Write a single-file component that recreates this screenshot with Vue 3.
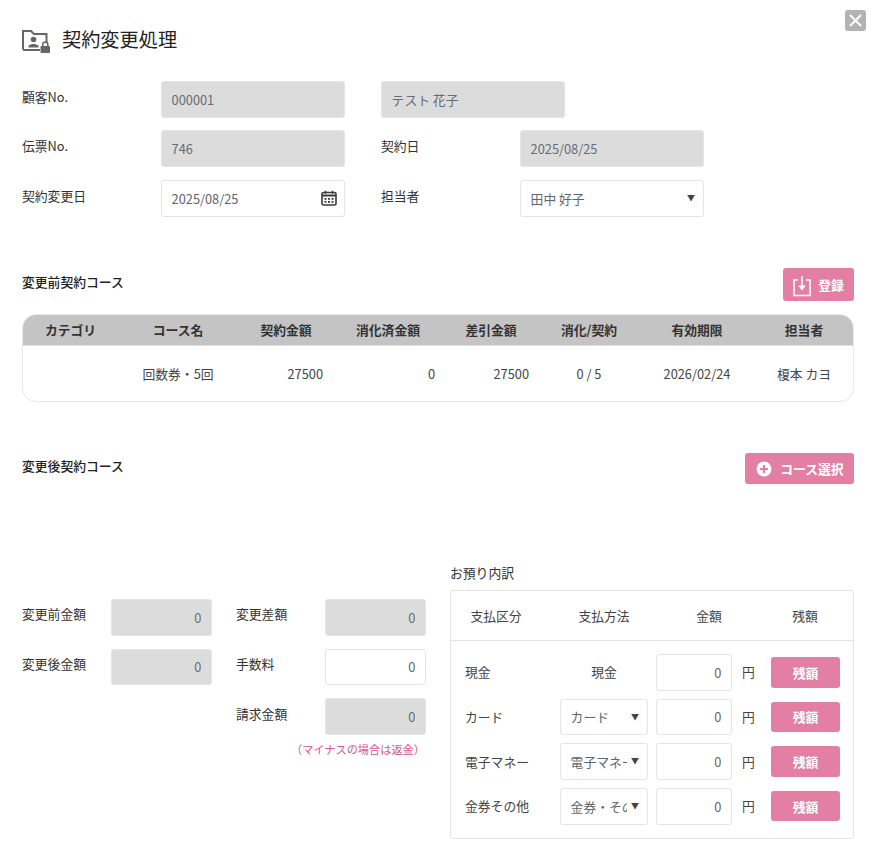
<script setup>
const columns = [
  { head: 'カテゴリ', cell: '', cls: '' },
  { head: 'コース名', cell: '回数券・5回', cls: '' },
  { head: '契約金額', cell: '27500', cls: 'amt-a' },
  { head: '消化済金額', cell: '0', cls: 'amt-b' },
  { head: '差引金額', cell: '27500', cls: 'amt-c' },
  { head: '消化/契約', cell: '0 / 5', cls: '' },
  { head: '有効期限', cell: '2026/02/24', cls: '' },
  { head: '担当者', cell: '榎本 カヨ', cls: 'last' }
]
const payments = [
  { label: '現金', method: '現金', select: false },
  { label: 'カード', method: 'カード', select: true },
  { label: '電子マネー', method: '電子マネー', select: true },
  { label: '金券その他', method: '金券・その他', select: true }
]
</script>

<template>
  <div class="page">
    <button class="close" type="button" aria-label="閉じる">
      <svg width="21" height="21" viewBox="0 0 21 21"><path d="M5 5 16 16M16 5 5 16" stroke="#fff" stroke-width="2" fill="none"/></svg>
    </button>

    <header class="title-row">
      <svg class="title-icon" width="29" height="23" viewBox="0 0 29 23">
        <path d="M1 19.500V1h8l3 3h12.500v8" fill="none" stroke="#666" stroke-width="2"/>
        <path d="M1 20h17" fill="none" stroke="#666" stroke-width="2"/>
        <circle cx="11.500" cy="9.500" r="2.800" fill="#666"/>
        <path d="M6.500 17.500v-2l3.500-1.500h3l3.500 1.500v2z" fill="#666"/>
        <rect x="18.500" y="16" width="9.500" height="7" rx="1" fill="#666"/>
        <path d="M20.800 16.500v-2a2.500 2.500 0 0 1 5 0v2" fill="none" stroke="#666" stroke-width="1.500"/>
      </svg>
      <h1>契約変更処理</h1>
    </header>

    <section class="form">
      <div class="form-row">
        <label>顧客No.</label>
        <input class="field" disabled value="000001" />
        <input class="field name" disabled value="テスト 花子" />
      </div>
      <div class="form-row">
        <label>伝票No.</label>
        <input class="field" disabled value="746" />
        <label class="second">契約日</label>
        <input class="field" disabled value="2025/08/25" />
      </div>
      <div class="form-row">
        <label>契約変更日</label>
        <div class="date-wrap">
          <input class="field" value="2025/08/25" />
          <svg class="cal" width="16" height="16" viewBox="0 0 16 16">
            <rect x="1" y="2.500" width="14" height="12.500" rx="1.500" fill="none" stroke="#3a3a3a" stroke-width="1.600"/>
            <path d="M1 5.500h14" stroke="#3a3a3a" stroke-width="2"/>
            <path d="M4.500 .8v3M11.500 .8v3" stroke="#3a3a3a" stroke-width="1.500"/>
            <path d="M3.500 8h2v1.800h-2zM7 8h2v1.800H7zM10.500 8h2v1.800h-2zM3.500 11h2v1.800h-2zM7 11h2v1.800H7zM10.500 11h2v1.800h-2z" fill="#3a3a3a"/>
          </svg>
        </div>
        <label class="second">担当者</label>
        <div class="select-wrap wide">
          <select class="field"><option>田中 好子</option></select>
        </div>
      </div>
    </section>

    <section class="section-head before">
      <h2>変更前契約コース</h2>
      <button class="pink reg" type="button">
        <svg width="20" height="22" viewBox="0 0 20 22">
          <path d="M6 5H2v15.500h16V5h-4" fill="none" stroke="#fff" stroke-width="1.600"/>
          <path d="M10 1v11" stroke="#fff" stroke-width="1.600"/>
          <path d="M6.200 10.500h7.600L10 15.500z" fill="#fff"/>
        </svg>
        登録
      </button>
    </section>

    <div class="course-table">
      <div class="t-row t-head">
        <div v-for="c in columns" :key="c.head" class="t-cell" :class="{ last: c.cls === 'last', shift: c.cls === 'amt-c' }">{{ c.head }}</div>
      </div>
      <div class="t-row t-body">
        <div v-for="c in columns" :key="c.head" class="t-cell" :class="c.cls">{{ c.cell }}</div>
      </div>
    </div>

    <section class="section-head after">
      <h2>変更後契約コース</h2>
      <button class="pink select-course" type="button">
        <svg width="16" height="16" viewBox="0 0 16 16">
          <circle cx="8" cy="8" r="7.500" fill="#fff"/>
          <path d="M8 4v8M4 8h8" stroke="#e27fa3" stroke-width="2.200"/>
        </svg>
        コース選択
      </button>
    </section>

    <section class="bottom">
      <div class="totals">
        <div class="total-col">
          <div class="total-row"><label>変更前金額</label><input class="field num" disabled value="0" /></div>
          <div class="total-row"><label>変更後金額</label><input class="field num" disabled value="0" /></div>
        </div>
        <div class="total-col">
          <div class="total-row"><label>変更差額</label><input class="field num" disabled value="0" /></div>
          <div class="total-row"><label>手数料</label><input class="field num" value="0" /></div>
          <div class="total-row"><label>請求金額</label><input class="field num" disabled value="0" /></div>
          <p class="note">（マイナスの場合は返金）</p>
        </div>
      </div>

      <div class="deposit">
        <div class="deposit-title">お預り内訳</div>
        <div class="panel">
          <div class="panel-head">
            <span class="first">支払区分</span><span>支払方法</span><span>金額</span><span>残額</span>
          </div>
          <div class="panel-body">
            <div v-for="p in payments" :key="p.label" class="pay-row">
              <span class="pay-label">{{ p.label }}</span>
              <div v-if="p.select" class="select-wrap">
                <select class="field"><option>{{ p.method }}</option></select>
              </div>
              <span v-else class="pay-method">{{ p.method }}</span>
              <input class="field num" value="0" />
              <span class="yen">円</span>
              <button class="pink rest" type="button">残額</button>
            </div>
          </div>
        </div>
      </div>
    </section>
  </div>
</template>

<style>
html, body { margin: 0; background: #fff; }
</style>

<style scoped>
* { box-sizing: border-box; }
.page {
  position: relative;
  width: 873px;
  height: 845px;
  overflow: hidden;
  padding: 20px 19px 0 22px;
  font-family: "Noto Sans CJK JP", "Noto Sans", sans-serif;
  font-size: 12.8px;
  color: #333;
  background: #fff;
}
.close {
  position: absolute;
  left: 845px;
  top: 10px;
  width: 21px;
  height: 21px;
  padding: 0;
  border: 0;
  border-radius: 3px;
  background: #b3b3b3;
  display: flex;
}
.title-row { display: flex; align-items: center; height: 40px; gap: 11px; }
.title-icon { margin-top: 2px; flex: none; }
h1 { margin: 0; font-size: 19.2px; font-weight: 400; color: #222; line-height: 38px; padding-bottom: 2px; }
h2 { margin: 0; font-size: 12.8px; font-weight: 500; color: #222; }

.form { margin-top: 20.8px; display: flex; flex-direction: column; gap: 12.8px; }
.form-row { display: flex; height: 36.8px; }
.form-row label { width: 139px; flex: none; padding-top: 6px; line-height: 20px; }
.form-row label.second { margin-left: 36px; }
.form-row > .field, .date-wrap, .wide { width: 184px; flex: none; }
.form-row > .name { margin-left: 36px; }

.field {
  width: 100%;
  height: 36.8px;
  padding: 0 9.600px;
  border: 1px solid #e4e4e4;
  border-radius: 3px;
  background: #fff;
  color: #5f656c;
  font: inherit;
  font-size: 12.8px;
  outline: none;
  appearance: none;
  opacity: 1;
}
.field:disabled { background: #dcdcdc; color: #666c73; -webkit-text-fill-color: #666c73; }
.num { text-align: right; }

.date-wrap { position: relative; }
.cal { position: absolute; right: 8px; top: 10px; }

.select-wrap { position: relative; }
.select-wrap .field { padding-right: 20px; }
.select-wrap::after {
  content: "▼";
  position: absolute;
  right: 9px;
  top: 8px;
  font-size: 8px;
  line-height: 20px;
  color: #444;
  pointer-events: none;
}

.section-head { display: flex; justify-content: space-between; align-items: flex-start; }
.section-head h2 { line-height: 20px; padding-top: 4px; }
.section-head.before { margin-top: 51.2px; }
.section-head.after { margin-top: 51px; }
.section-head.after h2 { padding-top: 3px; }

.pink {
  border: 0;
  border-radius: 3px;
  background: #e27fa3;
  color: #fff;
  font: inherit;
  font-size: 12.8px;
  font-weight: 700;
  display: flex;
  align-items: center;
  justify-content: center;
  padding: 0;
}
.reg { width: 71px; height: 33px; gap: 6px; padding-right: 1px; }
.reg svg { margin-top: 3px; }
.select-course { width: 109px; height: 31px; gap: 8px; padding-left: 1px; }
.select-course svg { margin-top: 2px; }

.course-table {
  margin-top: 13px;
  height: 88px;
  border: 1px solid #e8e8e8;
  border-radius: 14px;
  overflow: hidden;
}
.t-row { display: grid; grid-template-columns: 95px 120px 96px 108px 110px 74px 142px 85px; text-align: center; }
.t-head {
  height: 31px;
  line-height: 29px;
  background: #c4c4c4;
  border-bottom: 1px solid #dedede;
  font-weight: 700;
  color: #333;
}
.t-body { height: 55px; line-height: 56px; color: #444; }
.t-cell.last { padding-right: 13px; }
.t-cell.shift { padding-right: 12px; }
.t-cell.amt-a { text-align: right; padding-right: 11px; }
.t-cell.amt-b { text-align: right; padding-right: 7px; }
.t-cell.amt-c { text-align: right; padding-right: 23px; }

.bottom { margin-top: 79px; display: flex; }
.totals { width: 428px; flex: none; padding-top: 36px; display: flex; gap: 24px; }
.total-col { width: 190px; display: flex; flex-direction: column; gap: 12.8px; position: relative; }
.total-row { display: flex; height: 36.8px; }
.total-row label { width: 89px; flex: none; padding-top: 5.400px; line-height: 20px; }
.note {
  margin: -6px 0 0 -30px;
  padding-right: 1px;
  text-align: right;
  font-size: 11.2px;
  line-height: 14px;
  color: #d9578a;
  white-space: nowrap;
}

.deposit { width: 404px; flex: none; }
.deposit-title { height: 20px; line-height: 20px; margin-bottom: 7px; }
.panel { height: 249px; border: 1px solid #e4e4e4; border-radius: 3px; }
.panel-head {
  height: 50px;
  display: grid;
  grid-template-columns: 96px 114px 96px 96px;
  align-items: center;
  text-align: center;
  border-bottom: 1px solid #e4e4e4;
  color: #444;
}
.panel-head .first { padding-right: 6px; }
.panel-body { padding-top: 13px; display: flex; flex-direction: column; gap: 7.8px; }
.pay-row {
  display: grid;
  grid-template-columns: 95px 88px 84px 39px 69px;
  padding-left: 14px;
  height: 36.8px;
  align-items: center;
  color: #444;
}
.pay-row .num { margin-left: 8px; width: 76px; }
.pay-row .select-wrap { width: 88px; }
.pay-label, .pay-method, .yen { padding-bottom: 1px; }
.pay-method { text-align: center; }
.yen { padding-left: 10px; }
.rest { height: 30.6px; }
</style>
